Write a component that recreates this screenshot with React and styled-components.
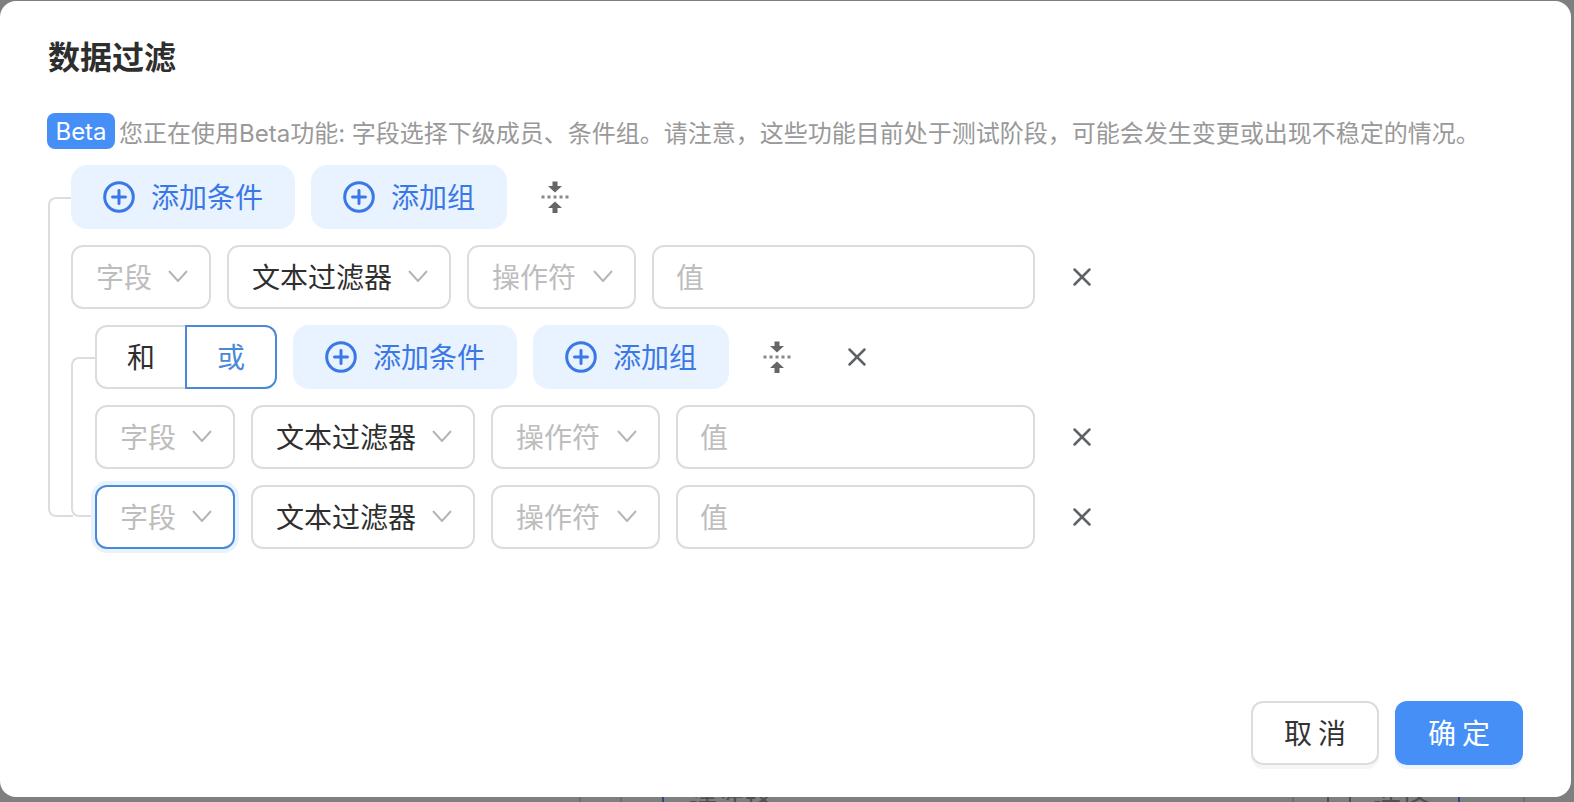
import React from "react";
import styled, { createGlobalStyle } from "styled-components";
import { X } from "lucide-react";

const GlobalStyle = createGlobalStyle`
  html, body {
    margin: 0;
    padding: 0;
    height: 100%;
    overflow: hidden;
  }
  body {
    background: #7f7f7f;
    font-family: "Inter", "Noto Sans CJK SC", sans-serif;
  }
  * { box-sizing: border-box; }
`;

const Backdrop = styled.div`
  position: relative;
  width: 1574px;
  height: 802px;
  padding: 1px 3px 5px 0;
  background: #7f7f7f;
  overflow: hidden;
`;

const Behind = styled.div`
  position: absolute;
  bottom: -14px;
  left: ${(p) => p.$left}px;
  display: flex;
  align-items: center;
  gap: 22px;
  font-size: 28px;
  line-height: 20px;
  color: #505050;
`;

const Tick = styled.i`
  position: absolute;
  bottom: 0;
  left: ${(p) => p.$left}px;
  width: 2px;
  height: 5px;
  background: ${(p) => p.$color || "#6e6e6e"};
`;

const CheckBox = styled.span`
  width: 24px;
  height: 24px;
  border: 2px solid #505050;
  border-radius: 4px;
`;

const Modal = styled.div`
  position: relative;
  display: flex;
  flex-direction: column;
  height: 100%;
  padding: 41px 48px 32px;
  background: #fff;
  border-radius: 16px;
`;

const Title = styled.h2`
  margin: 0;
  font-size: 32px;
  line-height: 32px;
  font-weight: 700;
  color: #2e2e2e;
`;

const Notice = styled.div`
  display: flex;
  align-items: center;
  gap: 4px;
  margin-top: 39px;
  height: 36px;
  font-size: 24px;
  color: #999;
  white-space: nowrap;
`;

const Badge = styled.span`
  display: flex;
  align-items: center;
  justify-content: center;
  width: 68px;
  height: 36px;
  margin-left: -1px;
  border-radius: 8px;
  background: #458ff7;
  color: #fff;
  font-size: 24px;
`;

const Tree = styled.div`
  position: relative;
  display: flex;
  flex-direction: column;
  gap: 16px;
  margin-top: 16px;
  padding-left: ${(p) => p.$indent}px;
  width: ${(p) => p.$width}px;

  &::before {
    content: "";
    position: absolute;
    left: 0;
    top: 32px;
    bottom: 32px;
    width: ${(p) => p.$indent}px;
    border: 2px solid #ddd;
    border-right: 0;
    border-radius: 8px 0 0 8px;
  }
`;

const SubTree = styled(Tree)`
  margin-top: 0;
`;

const Row = styled.div`
  position: relative;
  display: flex;
  align-items: center;
  gap: 16px;
  height: 64px;
`;

const Fields = styled.div`
  display: flex;
  flex: 1;
  gap: 16px;
`;

const AddButton = styled.button`
  display: flex;
  align-items: center;
  gap: 16px;
  height: 64px;
  width: ${(p) => p.$width}px;
  padding: 0 32px 2px;
  border: 0;
  border-radius: 16px;
  background: #e8f3ff;
  color: #3a78e6;
  font: inherit;
  font-size: 28px;
  white-space: nowrap;

  svg {
    margin-top: 2px;
  }
`;

const Select = styled.div`
  display: flex;
  align-items: center;
  justify-content: space-between;
  flex: none;
  width: ${(p) => p.$width}px;
  height: 64px;
  padding: 0 21px 2px 23px;
  border: 2px solid ${(p) => (p.$focus ? "#4a88d8" : "#dcdcdc")};
  border-radius: 12px;
  background: #fff;
  font-size: 28px;
  color: ${(p) => (p.$filled ? "#2e2e2e" : "#bdbdbd")};
  white-space: nowrap;
  box-shadow: ${(p) => (p.$focus ? "0 0 0 4px #e8f3ff" : "none")};

  svg {
    flex: none;
  }
`;

const ValueInput = styled.div`
  flex: 1;
  height: 64px;
  display: flex;
  align-items: center;
  padding: 0 22px 2px;
  border: 2px solid #dcdcdc;
  border-radius: 12px;
  font-size: 28px;
  color: #bdbdbd;
`;

const Segments = styled.div`
  display: flex;
  flex: none;
  width: 182px;
  height: 64px;
`;

const Segment = styled.div`
  flex: 1;
  display: flex;
  align-items: center;
  justify-content: center;
  padding-bottom: 2px;
  border: 2px solid ${(p) => (p.$active ? "#4a88d8" : "#dcdcdc")};
  border-right-width: ${(p) => (p.$active ? "2px" : 0)};
  border-radius: ${(p) => (p.$active ? "0 12px 12px 0" : "12px 0 0 12px")};
  background: #fff;
  font-size: 28px;
  color: ${(p) => (p.$active ? "#4a88d8" : "#2e2e2e")};
`;

const IconSlot = styled.span`
  display: flex;
  align-items: center;
  justify-content: center;
  flex: none;
  width: 32px;
  height: 36px;
  margin-left: ${(p) => p.$offset || 0}px;
  color: #5f6368;
`;

const Footer = styled.div`
  display: flex;
  justify-content: flex-end;
  gap: 16px;
  margin-top: auto;
`;

const FootButton = styled.button`
  width: 128px;
  height: 64px;
  padding: 0 0 2px 6px;
  border: ${(p) => (p.$primary ? "0" : "2px solid #dcdcdc")};
  border-radius: 12px;
  background: ${(p) => (p.$primary ? "#458ff7" : "#fff")};
  color: ${(p) => (p.$primary ? "#fff" : "#333")};
  font: inherit;
  font-size: 28px;
  letter-spacing: 6px;
  box-shadow: 0 4px 0 ${(p) => (p.$primary ? "#eef5ff" : "#f6f6f6")};
`;

function PlusCircle() {
  return (
    <svg width="32" height="32" viewBox="0 0 32 32" fill="none" stroke="currentColor" strokeWidth="3" strokeLinecap="round">
      <circle cx="16" cy="16" r="14.3" />
      <path d="M16 9.5v13M9.5 16h13" />
    </svg>
  );
}

function CollapseIcon() {
  return (
    <svg width="32" height="36" viewBox="0 0 32 36">
      <path fill="#666" d="M13.5 2.5h5V7H23l-7 6.5L9 7h4.5z" />
      <path fill="#666" d="M13.5 34v-5H9l7-6.5 7 6.5h-4.5v5z" />
      <path fill="#888" d="M2.5 16.5h3v3h-3zM8.5 16.5h3v3h-3zM14.5 16.5h3v3h-3zM20.5 16.5h3v3h-3zM26.5 16.5h3v3h-3z" />
    </svg>
  );
}

function Chevron() {
  return (
    <svg width="20" height="14" viewBox="0 0 20 14" fill="none" stroke="#b5b5b5" strokeWidth="2">
      <path d="M1 2l9 10 9-10" />
    </svg>
  );
}

function FilterRow({ focus }) {
  return (
    <Row>
      <Fields>
        <Select $width={140} $focus={focus}>字段<Chevron /></Select>
        <Select $width={224} $filled>文本过滤器<Chevron /></Select>
        <Select $width={169}>操作符<Chevron /></Select>
        <ValueInput>值</ValueInput>
      </Fields>
      <IconSlot $offset={15}><X size={30} strokeWidth={2} /></IconSlot>
    </Row>
  );
}

export default function App() {
  return (
    <Backdrop>
      <GlobalStyle />
      <Tick $left={579} />
      <Tick $left={620} />
      <Tick $left={662} $color="#2d4a80" />
      <Behind $left={689}>请选择</Behind>
      <Tick $left={1292} />
      <Tick $left={1458} $color="#2d4a80" />
      <Tick $left={1523} />
      <Behind $left={1327}><CheckBox />选择</Behind>
      <Modal>
        <Title>数据过滤</Title>
        <Notice>
          <Badge>Beta</Badge>
          您正在使用Beta功能: 字段选择下级成员、条件组。请注意，这些功能目前处于测试阶段，可能会发生变更或出现不稳定的情况。
        </Notice>
        <Tree $indent={23} $width={1050}>
          <Row>
            <AddButton $width={224}><PlusCircle />添加条件</AddButton>
            <AddButton $width={196}><PlusCircle />添加组</AddButton>
            <IconSlot $offset={16}><CollapseIcon /></IconSlot>
          </Row>
          <FilterRow />
          <SubTree $indent={24} $width={1027}>
            <Row>
              <Segments>
                <Segment>和</Segment>
                <Segment $active>或</Segment>
              </Segments>
              <AddButton $width={224}><PlusCircle />添加条件</AddButton>
              <AddButton $width={196}><PlusCircle />添加组</AddButton>
              <IconSlot $offset={16}><CollapseIcon /></IconSlot>
              <IconSlot $offset={32}><X size={30} strokeWidth={2} /></IconSlot>
            </Row>
            <FilterRow />
            <FilterRow focus />
          </SubTree>
        </Tree>
        <Footer>
          <FootButton>取消</FootButton>
          <FootButton $primary>确定</FootButton>
        </Footer>
      </Modal>
    </Backdrop>
  );
}
